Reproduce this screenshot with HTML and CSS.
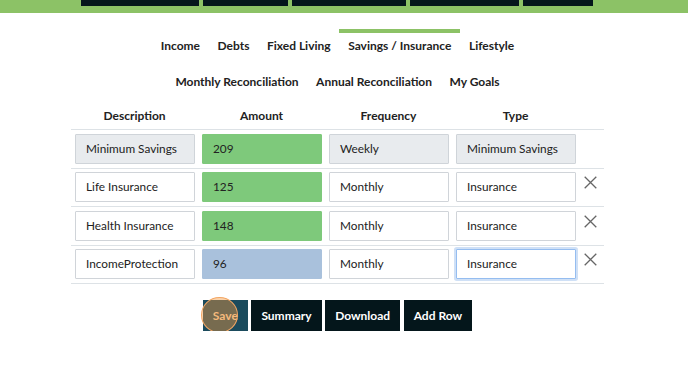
FILE: index.html
```html
<!DOCTYPE html>
<html>
<head>
<meta charset="utf-8">
<link rel="stylesheet" href="styles.css">
</head>
<body>
<header class="topbar">
  <div class="topnav">
    <span class="topbox w1"></span>
    <span class="topbox w2"></span>
    <span class="topbox w3"></span>
    <span class="topbox w4"></span>
    <span class="topbox w5"></span>
  </div>
</header>
<main class="page">
  <nav class="tabs">
    <a class="tab">Income</a>
    <a class="tab">Debts</a>
    <a class="tab">Fixed Living</a>
    <a class="tab active">Savings / Insurance</a>
    <a class="tab">Lifestyle</a>
  </nav>
  <nav class="tabs second">
    <a class="tab">Monthly Reconciliation</a>
    <a class="tab">Annual Reconciliation</a>
    <a class="tab">My Goals</a>
  </nav>
  <div class="grid">
    <div class="head">Description</div>
    <div class="head">Amount</div>
    <div class="head">Frequency</div>
    <div class="head">Type</div>
    <div class="head"></div>

    <div class="row">
      <div class="cell"><div class="field ro">Minimum Savings</div></div>
      <div class="cell"><div class="field green">209</div></div>
      <div class="cell"><div class="field ro">Weekly</div></div>
      <div class="cell"><div class="field ro">Minimum Savings</div></div>
      <div class="cell"></div>
    </div>
    <div class="row">
      <div class="cell"><div class="field">Life Insurance</div></div>
      <div class="cell"><div class="field green">125</div></div>
      <div class="cell"><div class="field">Monthly</div></div>
      <div class="cell"><div class="field">Insurance</div></div>
      <div class="cell"><svg class="del" viewBox="0 0 13 13"><path d="M0.7 0.7 L12.3 12.3 M12.3 0.7 L0.7 12.3"/></svg></div>
    </div>
    <div class="row">
      <div class="cell"><div class="field">Health Insurance</div></div>
      <div class="cell"><div class="field green">148</div></div>
      <div class="cell"><div class="field">Monthly</div></div>
      <div class="cell"><div class="field">Insurance</div></div>
      <div class="cell"><svg class="del" viewBox="0 0 13 13"><path d="M0.7 0.7 L12.3 12.3 M12.3 0.7 L0.7 12.3"/></svg></div>
    </div>
    <div class="row last">
      <div class="cell"><div class="field">IncomeProtection</div></div>
      <div class="cell"><div class="field blue">96</div></div>
      <div class="cell"><div class="field">Monthly</div></div>
      <div class="cell"><div class="field focus">Insurance</div></div>
      <div class="cell"><svg class="del" viewBox="0 0 13 13"><path d="M0.7 0.7 L12.3 12.3 M12.3 0.7 L0.7 12.3"/></svg></div>
    </div>
  </div>
  <div class="actions">
    <button class="btn save">Save<span class="ring"></span></button>
    <button class="btn">Summary</button>
    <button class="btn">Download</button>
    <button class="btn">Add Row</button>
  </div>
</main>
</body>
</html>
```

FILE: styles.css
```css
* { box-sizing: border-box; }
body {
  margin: 0;
  background: #fff;
  font-family: Lato, "Open Sans", sans-serif;
  color: #222;
}
.topbar {
  background: #8cc266;
  height: 13px;
}
.topnav {
  width: 675px;
  display: flex;
  padding-left: 81px;
  gap: 4px;
}
.topbox {
  display: block;
  height: 6px;
  background: #04161b;
}
.w1 { width: 118px; }
.w2 { width: 85px; }
.w3 { width: 114px; }
.w4 { width: 109px; }
.w5 { width: 70px; }

.page {
  width: 675px;
  padding-top: 16px;
}
.tabs {
  display: flex;
  justify-content: center;
}
.tabs.second { margin-top: 6px; }
.tab {
  border-top: 4px solid transparent;
  padding: 5px 8.75px 5px;
  font-size: 12px;
  line-height: 16px;
  font-weight: 700;
  color: #222;
}
.tab.active { border-top-color: #8cc266; }

.grid {
  margin: 0 71px;
  width: 533px;
  display: grid;
  grid-template-columns: 127px 127px 127px 127px 25px;
}
.head {
  text-align: center;
  font-weight: 700;
  font-size: 12px;
  line-height: 16px;
  padding: 13px 0 5px;
}
.row {
  display: contents;
}
.cell {
  border-top: 1px solid #dde2e6;
  padding: 3.5px 3px 4px 4px;
}
.row.last .cell { border-bottom: 1px solid #dde2e6; }
.cell:last-child { padding: 7.5px 0 0 5px; }
.field {
  height: 30px;
  border: 1px solid #d0d4d9;
  background: #fff;
  border-radius: 1px;
  padding-left: 10px;
  font-size: 11.8px;
  line-height: 28px;
  color: #222;
}
.field.ro { background: #e8ebee; border-color: #cfd4d9; }
.field.green { background: #7ec97b; border-color: #7ec97b; }
.field.blue { background: #a9c1dc; border-color: #a9c1dc; }
.field.focus {
  border-color: #95bdf0;
  box-shadow: 0 0 0 2px #cfe0f6;
}
.del {
  display: block;
  width: 13px;
  height: 13px;
  fill: none;
  stroke: #666;
  stroke-width: 1.3;
}

.actions {
  display: flex;
  justify-content: center;
  gap: 3.5px;
  margin-top: 15.5px;
}
.btn {
  position: relative;
  height: 31.5px;
  padding: 0 10px;
  border: none;
  background: #04161b;
  color: #fff;
  font-family: Lato, sans-serif;
  font-weight: 700;
  font-size: 12px;
}
.btn.save {
  background: #1b4b5d;
  color: #f8d3ad;
}
.ring {
  position: absolute;
  left: -1.5px;
  top: -3px;
  width: 37px;
  height: 36px;
  border-radius: 50%;
  border: 1.5px solid #f3a663;
  background: rgba(240, 150, 60, 0.43);
}
```
